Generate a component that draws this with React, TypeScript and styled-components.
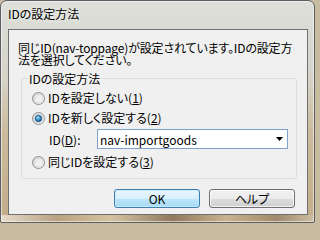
import React from "react";
import styled, { createGlobalStyle } from "styled-components";

const Global = createGlobalStyle`
  html, body { margin: 0; padding: 0; width: 315px; height: 223px; overflow: hidden; background: #c8bca0; }
  #root { width: 315px; height: 223px; }
  * { box-sizing: border-box; }
`;

const font = `"Noto Sans CJK JP", "Noto Sans", sans-serif`;

const Window = styled.div`
  width: 315px;
  height: 223px;
  display: flex;
  flex-direction: column;
  border: 1px solid #5b5d60;
  border-radius: 7px 7px 2px 2px;
  box-shadow: inset 0 0 0 1px rgba(255, 255, 255, 0.55);
  background:
    linear-gradient(90deg, #e6dccb 0%, #b9a282 18%, #d4c3a2 35%, #8f7a5c 55%, #c7b391 72%, #a08b6c 88%, #cdbd9f 100%) left bottom / 100% 7px no-repeat,
    linear-gradient(180deg, #dddfd9 0%, #d9dad3 14%, #d6d3c8 35%, #cbbb9c 60%, #c3ad8a 100%);
  font-family: ${font};
  font-size: 12px;
  font-feature-settings: "palt";
  color: #000;
  padding: 0 6px 7px 7px;
`;

const TitleBar = styled.div`
  height: 28px;
  flex: none;
  padding-top: 7px;
  line-height: 12px;
  font-size: 12px;
  white-space: nowrap;
  text-shadow: 0 0 5px rgba(255, 255, 255, 0.95);
`;

const Client = styled.div`
  flex: 1;
  display: flex;
  flex-direction: column;
  border: 1px solid #6e6f70;
  background: #f0f0f0;
`;

const Message = styled.div`
  margin: 12px 0 0 9px;
  line-height: 12px;
  letter-spacing: -0.15px;
  white-space: nowrap;
`;

const Group = styled.fieldset`
  margin: 6px 10px 0 12px;
  padding: 0;
  min-width: 0;
  border: 1px solid #d5dfe5;
  border-radius: 3px;
`;

const Legend = styled.legend`
  margin-left: 6px;
  padding: 0 1px;
  line-height: 13px;
  font-size: 12px;
`;

const Options = styled.div`
  display: flex;
  flex-direction: column;
  padding: 3px 0 6px 10px;
`;

const RadioRow = styled.div<{ $gapTop?: number }>`
  height: 20px;
  display: flex;
  align-items: center;
  gap: 3px;
  margin-top: ${(p) => p.$gapTop ?? 0}px;
  white-space: nowrap;
  line-height: 12px;
`;

const IdRow = styled.div`
  height: 20px;
  margin-top: 1px;
  display: flex;
  align-items: center;
  padding-left: 17px;
  white-space: nowrap;
`;

const IdLabel = styled.span`
  width: 48px;
  flex: none;
`;

const Combo = styled.div`
  width: 191px;
  height: 20px;
  display: flex;
  align-items: center;
  justify-content: space-between;
  padding: 0 4px 0 2px;
  background: #fff;
  border: 1px solid #7da2ce;
`;

const ButtonRow = styled.div`
  margin-top: 10px;
  display: flex;
  justify-content: flex-end;
  gap: 9px;
  padding-right: 12px;
`;

const Button = styled.div<{ $default?: boolean }>`
  width: 86px;
  height: 19px;
  display: flex;
  align-items: center;
  justify-content: center;
  border-radius: 3px;
  font-size: 12px;
  line-height: 12px;
  border: 1px solid ${(p) => (p.$default ? "#3c7fb1" : "#707070")};
  box-shadow: inset 0 0 0 1px ${(p) => (p.$default ? "rgba(200,235,252,0.9)" : "rgba(255,255,255,0.75)")};
  background: ${(p) =>
    p.$default
      ? "linear-gradient(180deg, #eaf6fd 0%, #d9f0fc 50%, #bee6fd 50%, #a7d9f5 100%)"
      : "linear-gradient(180deg, #f2f2f2 0%, #ebebeb 50%, #dddddd 50%, #cfcfcf 100%)"};
`;

const U = styled.span`
  text-decoration: underline;
  text-underline-offset: 1px;
`;

const RadioSvg = styled.svg`
  flex: none;
  display: block;
`;

const Radio = ({ checked, id }: { checked?: boolean; id: string }) => (
  <RadioSvg viewBox="0 0 13 13" width={13} height={13}>
    <defs>
      <linearGradient id={`${id}-o`} x1="0" y1="0" x2="1" y2="1">
        <stop offset="0" stopColor="#d0d0d0" />
        <stop offset="1" stopColor="#ffffff" />
      </linearGradient>
      <linearGradient id={`${id}-i`} x1="0" y1="0" x2="1" y2="1">
        <stop offset="0" stopColor="#e4e4e4" />
        <stop offset="1" stopColor="#fafafa" />
      </linearGradient>
      <radialGradient id={`${id}-d`} cx="0.4" cy="0.35" r="0.7">
        <stop offset="0" stopColor="#bfe6fb" />
        <stop offset="0.45" stopColor="#3f98d6" />
        <stop offset="1" stopColor="#14508d" />
      </radialGradient>
    </defs>
    <circle cx="6.5" cy="6.5" r="6" fill={`url(#${id}-o)`} stroke="#8e8f8f" strokeWidth="1" />
    <circle cx="6.5" cy="6.5" r="4.3" fill={`url(#${id}-i)`} stroke="#c9c9c9" strokeWidth="0.6" />
    {checked && <circle cx="6.5" cy="6.5" r="3.2" fill={`url(#${id}-d)`} stroke="#1b4a7b" strokeWidth="0.8" />}
  </RadioSvg>
);

const Arrow = () => (
  <svg width="7" height="4" viewBox="0 0 7 4" style={{ display: "block" }}>
    <polygon points="0,0 7,0 3.5,4" fill="#000" />
  </svg>
);

export default function App() {
  return (
    <>
      <Global />
      <Window>
        <TitleBar>IDの設定方法</TitleBar>
        <Client>
          <Message>
            同じID(nav-toppage)が設定されています。IDの設定方
            <br />
            法を選択してください。
          </Message>
          <Group>
            <Legend>IDの設定方法</Legend>
            <Options>
              <RadioRow>
                <Radio id="r1" />
                <span>
                  IDを設定しない(<U>1</U>)
                </span>
              </RadioRow>
              <RadioRow>
                <Radio id="r2" checked />
                <span>
                  IDを新しく設定する(<U>2</U>)
                </span>
              </RadioRow>
              <IdRow>
                <IdLabel>
                  ID(<U>D</U>):
                </IdLabel>
                <Combo>
                  <span>nav-importgoods</span>
                  <Arrow />
                </Combo>
              </IdRow>
              <RadioRow $gapTop={3}>
                <Radio id="r3" />
                <span>
                  同じIDを設定する(<U>3</U>)
                </span>
              </RadioRow>
            </Options>
          </Group>
          <ButtonRow>
            <Button $default>OK</Button>
            <Button>ヘルプ</Button>
          </ButtonRow>
        </Client>
      </Window>
    </>
  );
}
